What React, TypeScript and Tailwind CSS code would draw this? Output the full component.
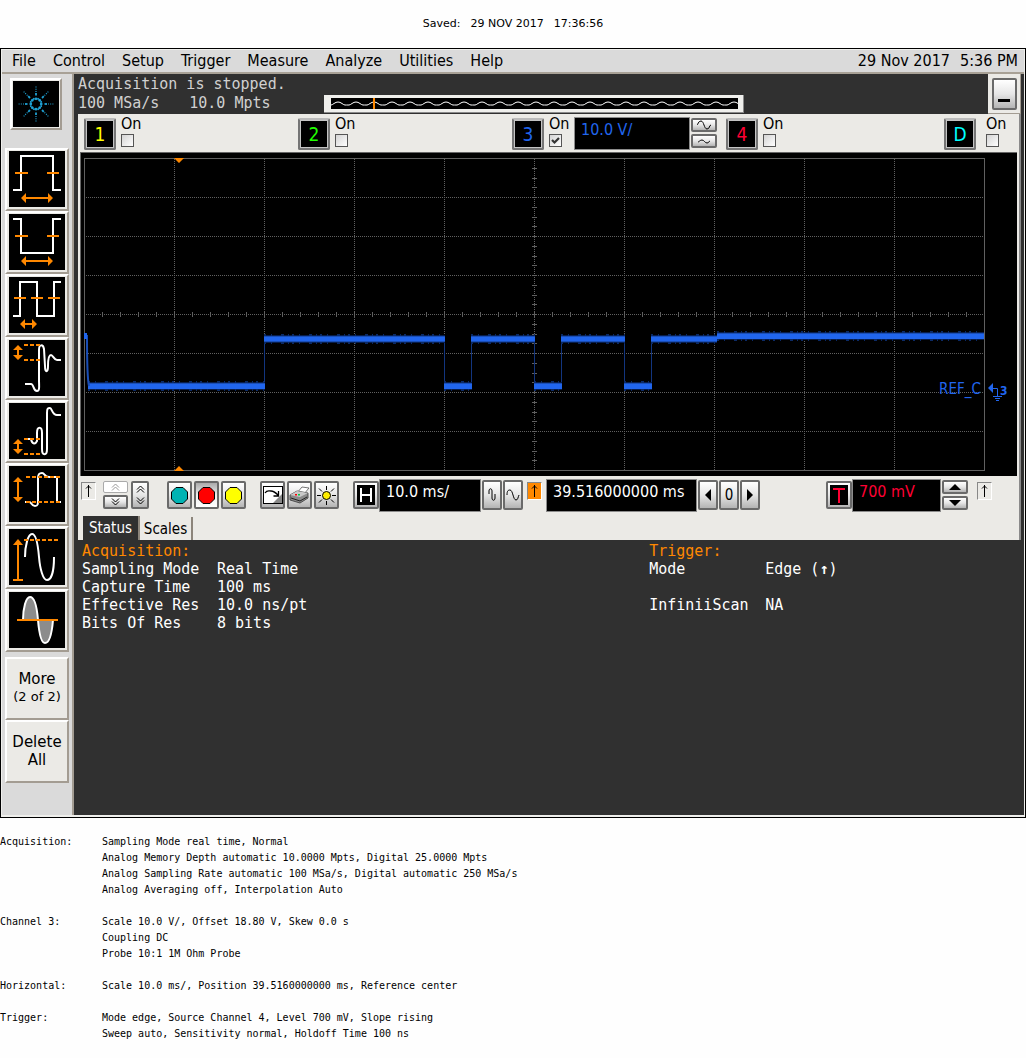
import { useState } from 'react';
import type { ReactNode } from 'react';

const ORANGE = '#ff8800';
const BLUE = '#2166ee';

const keyClass =
  'flex shrink-0 items-center justify-center rounded-xs border-2 border-[#6a6a6a] bg-linear-to-b from-white via-[#e6e6e6] to-[#b4b4b4] text-black';
const fieldClass =
  'min-w-0 shrink-0 border border-[#8c8c8c] bg-black pb-2 pl-1.5 text-[16px] outline-none';

/* ---------- menu ---------- */

const menus = ['File', 'Control', 'Setup', 'Trigger', 'Measure', 'Analyze', 'Utilities', 'Help'];

function MenuBar() {
  return (
    <header className="flex h-6 items-center justify-between border-b-2 border-[#a8a196] pr-1.5 pl-2.5 text-[16px]">
      <nav className="flex gap-[17px]">
        {menus.map((m) => (
          <button key={m} type="button" className="leading-5">
            {m}
          </button>
        ))}
      </nav>
      <div className="flex gap-2.5 leading-5">
        <span>29 Nov 2017</span>
        <span>5:36 PM</span>
      </div>
    </header>
  );
}

/* ---------- measurement sidebar ---------- */

function HArrow({ x1, x2, y }: { x1: number; x2: number; y: number }) {
  return (
    <g fill={ORANGE}>
      <rect x={x1 + 4} y={y - 1} width={x2 - x1 - 8} height={2} />
      <path d={`M${x1} ${y}l5-5v10zM${x2} ${y}l-5-5v10z`} />
    </g>
  );
}

function VArrow({ y1, y2 }: { y1: number; y2: number }) {
  return (
    <g fill={ORANGE}>
      <rect x={8} y={y1 + 4} width={2} height={y2 - y1 - 8} />
      <path d={`M9 ${y1}l5 5h-10zM9 ${y2}l5-5h-10z`} />
    </g>
  );
}

function Trace({ d }: { d: string }) {
  return <path d={d} fill="none" stroke="white" strokeWidth={2} />;
}

function Dash({ d }: { d: string }) {
  return <path d={d} fill="none" stroke={ORANGE} strokeWidth={2} strokeDasharray="4 2" />;
}

function Level({ d }: { d: string }) {
  return <path d={d} fill="none" stroke={ORANGE} strokeWidth={2} />;
}

const measurements: { name: string; icon: ReactNode }[] = [
  {
    name: 'Positive width',
    icon: (
      <>
        <Trace d="M4 39H12V5H44V39H52" />
        <Level d="M6 22H19M38 22H50" />
        <HArrow x1={12} x2={44} y={47} />
      </>
    ),
  },
  {
    name: 'Negative width',
    icon: (
      <>
        <Trace d="M4 5H12V39H44V5H52" />
        <Level d="M6 22H19M38 22H50" />
        <HArrow x1={12} x2={44} y={47} />
      </>
    ),
  },
  {
    name: 'Period',
    icon: (
      <>
        <Trace d="M4 39H11V5H28V39H45V5H52" />
        <Level d="M5 21H17M22 21H34M39 21H51" />
        <HArrow x1={11} x2={28} y={47} />
      </>
    ),
  },
  {
    name: 'Overshoot',
    icon: (
      <>
        <Trace d="M16 44H22C25 44 24 51 28 51C31 51 30 46 30 40V10C30 4 34 4 35 9L36 26C36 33 39 33 39 26C39 18 40 15 42 15S45 20 48 20H52" />
        <Dash d="M15 5H31M15 20H31" />
        <VArrow y1={5} y2={20} />
      </>
    ),
  },
  {
    name: 'Preshoot',
    icon: (
      <>
        <Trace d="M19 36H22C23 41 26 42 28 38L28 30C28 23 33 23 33 30V46C33 53 38 53 38 46V10C38 5 39 5 41 5C43 5 43 12 48 12H52" />
        <Dash d="M15 36H31M15 51H31" />
        <VArrow y1={36} y2={51} />
      </>
    ),
  },
  {
    name: 'Amplitude',
    icon: (
      <>
        <Trace d="M16 36H20C23 36 22 40 26 40C29 40 29 38 29 34V12C29 8 30 7 33 7C36 7 35 11 40 11H48V36H52" />
        <Dash d="M17 11H51M17 36H51" />
        <VArrow y1={11} y2={36} />
      </>
    ),
  },
  {
    name: 'Maximum',
    icon: (
      <>
        <Trace d="M16 28C16 17 19 5 23 5C27 5 29 16 30 28C31 40 34 51 38 51C43 51 45 40 45 28" />
        <Dash d="M15 11H49" />
        <Level d="M4 51H14M9 51V14" />
        <path d="M9 10l5 6h-10z" fill={ORANGE} />
      </>
    ),
  },
  {
    name: 'Area',
    icon: (
      <>
        <path
          d="M14 28C14 16 17 5 21 5C26 5 28 16 29 28C30 40 32 51 36 51C41 51 43 40 44 28"
          fill="#8c8c8c"
          stroke="white"
          strokeWidth={2}
        />
        <Level d="M8 28H49" />
      </>
    ),
  },
];

const spokes = [0, 45, 90, 135, 180, 225, 270, 315];

function SparkLogo() {
  return (
    <svg viewBox="0 0 46 46" className="size-full" fill="#1ea0d2" stroke="#1ea0d2">
      {spokes.map((a) => (
        <g key={a} transform={`rotate(${a} 23 23)`}>
          <circle cx={28.2} cy={23} r={1.4} stroke="none" />
          <path d="M31.500 23H34" strokeWidth={1.8} />
          <path d="M35 23H40.500" strokeWidth={1.2} strokeDasharray="1 1.200" />
        </g>
      ))}
      {spokes.map((a) => (
        <circle key={a} cx={28.6} cy={23} r={1} stroke="none" transform={`rotate(${a + 22} 23 23)`} />
      ))}
    </svg>
  );
}

const bevel = 'border-2 border-t-white border-l-white border-r-[#a39c92] border-b-[#a39c92] bg-[#ebeae6]';

function Sidebar() {
  return (
    <aside className="flex w-[72px] shrink-0 flex-col border-r-2 border-[#a39c92] bg-[#dadada] pl-[3px]">
      <button type="button" aria-label="About" className={`${bevel} mt-1 ml-[5px] size-[52px] p-px`}>
        <span className="block size-full bg-black">
          <SparkLogo />
        </span>
      </button>
      <div className="mt-[18px] flex flex-col">
        {measurements.map((m) => (
          <button key={m.name} type="button" aria-label={m.name} className={`${bevel} flex h-[63px] w-16 p-0.5 pt-px`}>
            <svg viewBox="0 0 56 56" className="size-14 bg-black">
              {m.icon}
            </svg>
          </button>
        ))}
      </div>
      <div className="mt-[5px] flex flex-col [font-family:'DejaVu_Sans',sans-serif] text-[15px] leading-[18px]">
        <button type="button" className={`${bevel} h-[63px] w-16 pb-0.5`}>
          More
          <span className="block text-[13px]">(2 of 2)</span>
        </button>
        <button type="button" className={`${bevel} h-[63px] w-16 pb-0.5`}>
          Delete All
        </button>
      </div>
    </aside>
  );
}

/* ---------- acquisition banner ---------- */

const memoryWave =
  'M0 5' + Array.from({ length: 23 }, () => 'q1 0 3-1.5t4-1.5t4 1.5t3 1.5t4 0').join('');

function AcquisitionBar() {
  return (
    <div className="flex h-10 justify-between">
      <div className="flex">
        <div className="w-[246px] pt-px [font-family:'DejaVu_Sans_Mono',monospace] text-[15px] leading-[19px] text-[#d0d0d0]">
          <p>Acquisition is stopped.</p>
          <div className="flex gap-[30px]">
            <span>100 MSa/s</span>
            <span>10.0 Mpts</span>
          </div>
        </div>
        <div className="mb-px self-end border-r border-b border-[#8a8a8a] bg-[#efefec] py-[3px] pr-[5px] pl-[7px]">
          <svg viewBox="0 0 407 11" className="h-[11px] w-[407px] bg-black">
            <path d={memoryWave} fill="none" stroke="white" strokeWidth={1} transform="translate(0 2)" />
            <rect x={42} y={0} width={2} height={11} fill={ORANGE} />
          </svg>
        </div>
      </div>
      <div className="flex w-[33px] items-center justify-center border-r border-b border-[#a39c92] bg-[#ebeae6]">
        <button type="button" aria-label="Minimize" className={`${keyClass} h-8 w-[25px] items-end pb-1.5`}>
          <span className="h-[3px] w-3 bg-black" />
        </button>
      </div>
    </div>
  );
}

/* ---------- channels ---------- */

function Channel({
  id,
  color,
  on = false,
  wide = false,
  children,
}: {
  id: string;
  color: string;
  on?: boolean;
  wide?: boolean;
  children?: ReactNode;
}) {
  const [checked, setChecked] = useState(on);
  return (
    <div className={`flex items-start pt-1 ${wide ? 'gap-2.5' : 'gap-[5px]'}`}>
      <button
        type="button"
        className={`size-8 shrink-0 rounded-xs border-2 border-[#757575] border-t-[#bbb] bg-black text-center text-[19px] leading-7 outline-1 -outline-offset-3 outline-[#c4c4c4] ${color}`}
      >
        {id}
      </button>
      <div className="flex items-start">
        <label className="relative -mt-1 flex w-[25px] shrink-0 flex-col text-[16px] leading-5">
          On
          <input
            type="checkbox"
            checked={checked}
            onChange={() => setChecked(!checked)}
            className="size-[13px] appearance-none border border-[#555] bg-linear-to-br from-[#d4d4d4] to-white"
          />
          {checked && (
            <svg viewBox="0 0 13 13" className="pointer-events-none absolute top-5 left-0 size-[13px]">
              <path d="M3 6L5.5 8.500L10 4" fill="none" stroke="#333" strokeWidth={2.2} />
            </svg>
          )}
        </label>
        {children}
      </div>
    </div>
  );
}

function ChannelRow() {
  return (
    <div className="grid h-[38px] grid-cols-[214fr_214fr_214fr_218fr_75fr] pl-1.5">
      <Channel id="1" color="text-[#ffff00]" />
      <Channel id="2" color="text-[#22ff00]" />
      <Channel id="3" color="text-[#2166ee]" on>
        <input aria-label="Channel 3 scale" defaultValue="10.0 V/" className={`${fieldClass} -mt-px h-[33px] w-[116px] text-[#2166ee]`} />
        <span className="ml-px flex flex-col gap-0.5">
          <button type="button" aria-label="Larger scale" className={`${keyClass} h-[14px] w-[26px]`}>
            <svg viewBox="0 0 16 10" className="h-2.5 w-4" fill="none" stroke="black">
              <path d="M1 5C2 5 2 1 5 1S8 9 11 9S13 5 15 5" />
            </svg>
          </button>
          <button type="button" aria-label="Smaller scale" className={`${keyClass} h-[14px] w-[26px]`}>
            <svg viewBox="0 0 16 10" className="h-2.5 w-4" fill="none" stroke="black">
              <path d="M2 6C3 6 4 4 6 4S9 7 11 7S13 5 14 5" />
            </svg>
          </button>
        </span>
      </Channel>
      <Channel id="4" color="text-[#ff0033]" />
      <Channel id="D" color="text-[#00ffff]" wide />
    </div>
  );
}

/* ---------- graticule ---------- */

const columns = [174, 264, 354, 444, 624, 714, 804, 894];
const rows = [197, 236, 275, 353, 392, 431];
const highs = [
  { x: 264, w: 181, y: 339, h: 4 },
  { x: 471, w: 64, y: 339, h: 4 },
  { x: 561, w: 64, y: 339, h: 4 },
  { x: 651, w: 66, y: 339, h: 4 },
  { x: 717, w: 267, y: 336, h: 5 },
];
const lows = [
  { x: 88, w: 177, y: 386, h: 5 },
  { x: 444, w: 28, y: 386, h: 5 },
  { x: 534, w: 28, y: 386, h: 5 },
  { x: 624, w: 28, y: 386, h: 5 },
];
const edges = [264, 444, 471, 534, 561, 624, 651];

function Graticule() {
  const ticksX = Array.from({ length: 49 }, (_, i) => 102 + i * 18);
  const ticksY = Array.from({ length: 31 }, (_, i) => Math.round(158 + (i + 1) * 9.75));
  return (
    <svg viewBox="81 153 936 323" className="block w-full bg-black" role="img" aria-label="Waveform">
      <g stroke="#606060" fill="none" shapeRendering="crispEdges">
        <rect x={84.5} y={158.5} width={900} height={312} />
        <g strokeDasharray="1 1">
          {columns.map((x) => (
            <path key={x} d={`M${x + 0.5} 159V470`} />
          ))}
          {rows.map((y) => (
            <path key={y} d={`M86 ${y + 0.5}H984`} />
          ))}
          <path d="M86 314.500H984M534.500 159V470" />
        </g>
        {ticksX.map((x) => (
          <path key={x} d={`M${x + 0.5} 312V317`} />
        ))}
        {ticksY.map((y) => (
          <path key={y} d={`M532 ${y + 0.5}H537`} />
        ))}
      </g>
      <g shapeRendering="crispEdges">
        {edges.map((x) => (
          <rect key={x} x={x} y={340} width={1} height={46} fill="#12357f" />
        ))}
        {[...highs, ...lows].map((s) => (
          <g key={`${s.x}-${s.y}`}>
            <path d={`M${s.x} ${s.y}h${s.w}`} stroke="#071d4c" strokeWidth={8} />
            <path d={`M${s.x} ${s.y}h${s.w}`} stroke="#0b2a66" strokeWidth={10} strokeDasharray="2 5 1 9 3 4 1 3" />
            <path d={`M${s.x} ${s.y}h${s.w}`} stroke="#1a4fb8" strokeWidth={6} />
            <rect x={s.x} y={s.y - 2} width={s.w} height={s.h} fill={BLUE} />
          </g>
        ))}
      </g>
      <path d="M84 336H87C87 350 87 378 89 386" fill="none" stroke="#1a4fb8" strokeWidth={2} />
      <rect x={84} y={333} width={3} height={6} fill={BLUE} />
      <path d="M174 158h10l-5 5zM174 471h10l-5-5z" fill={ORANGE} />
      <text x={939} y={394} fontSize={15} fill={BLUE}>
        REF_C
      </text>
      <path d="M988 388l5-5v10z" fill={BLUE} />
      <path d="M992 388.500H997.500V396M993 396.500H1002M995 398.500H1000M996 400.500H999" stroke={BLUE} fill="none" />
      <text x={1000} y={395} fontSize={12} fontWeight={700} fill={BLUE}>
        3
      </text>
    </svg>
  );
}

/* ---------- toolbar ---------- */

function UpArrow({ label, orange = false }: { label: string; orange?: boolean }) {
  return (
    <button
      type="button"
      aria-label={label}
      className={`mt-0.5 flex h-[18px] w-[15px] shrink-0 items-center justify-center border border-t-[#888] border-l-[#888] border-r-white border-b-white ${orange ? 'bg-[#ff8800]' : 'bg-[#ebeae6]'}`}
    >
      <svg viewBox="0 0 7 12" className="h-3 w-[7px]" fill="none" stroke="black">
        <path d="M3.500 0V12M1 3.500L3.500 1L6 3.500" />
      </svg>
    </button>
  );
}

function Key({ label, className, children }: { label: string; className: string; children: ReactNode }) {
  return (
    <button type="button" aria-label={label} className={`${keyClass} ${className}`}>
      {children}
    </button>
  );
}

function Chevron({ up = false }: { up?: boolean }) {
  return (
    <svg viewBox="0 0 9 8" className={`h-2 w-[9px] ${up ? '' : 'rotate-180'}`} fill="none" stroke="currentColor">
      <path d="M1 4.500L4.500 1L8 4.500M1 7.500L4.500 4L8 7.500" />
    </svg>
  );
}

function Octagon({ fill }: { fill: string }) {
  return (
    <svg viewBox="0 0 17 17" className="size-[17px] shrink-0">
      <path d="M5 .5h7l4.500 4.500v7L12 16.500H5L.5 12V5z" fill={fill} stroke="black" />
    </svg>
  );
}

function Toolbar() {
  return (
    <div className="flex h-[37px] items-start pt-1 pl-[3px]">
      <div className="flex items-start">
        <UpArrow label="Marker up" />
        <div className="ml-[7px] flex flex-col gap-0.5 pt-px">
          <button type="button" aria-label="Expand" className="flex h-3 w-[25px] items-center justify-center rounded-xs border border-[#aaa] bg-white text-[#999]">
            <Chevron up />
          </button>
          <Key label="Collapse" className="h-3.5 w-[25px]">
            <Chevron />
          </Key>
        </div>
        <Key label="Resize" className="mt-px ml-[3px] h-7 w-[18px] flex-col gap-1">
          <Chevron up />
          <Chevron />
        </Key>
      </div>

      <div className="mt-px ml-[18px] flex gap-0.5">
        <Key label="Run" className="h-7 w-[25px]">
          <Octagon fill="#00b3b3" />
        </Key>
        <button type="button" aria-label="Stop" className="flex h-7 w-[25px] items-center justify-center rounded-xs border-2 border-[#6a6a6a] bg-linear-to-b from-[#aaa] via-[#eee] to-white">
          <Octagon fill="#ff0000" />
        </button>
        <Key label="Single" className="h-7 w-[25px]">
          <Octagon fill="#ffff00" />
        </Key>
      </div>

      <div className="mt-px ml-3.5 flex gap-0.5">
        <Key label="Clear display" className="h-7 w-[25px]">
          <svg viewBox="0 0 20 18" className="h-[18px] w-5 shrink-0">
            <rect x={0.5} y={0.5} width={19} height={17} fill="white" stroke="black" />
            <path d="M19 8V17H10z" fill="#888" />
            <path d="M2 7C4 4 5 5 8 5C11 5 13 7 15 9M15.500 5V10H10.500" fill="none" stroke="black" strokeWidth={1.3} />
          </svg>
        </Key>
        <Key label="Print" className="h-7 w-[25px]">
          <svg viewBox="0 0 21 20" className="h-5 w-[21px] shrink-0">
            <path d="M8 8L13 2L20 3L15 9z" fill="white" stroke="#555" strokeWidth={0.8} />
            <path d="M1 10L8 6L19 8V13L11 18L1 15z" fill="#8b8b8b" stroke="#333" strokeWidth={0.8} />
            <path d="M1 10L8 6L19 8L11 12z" fill="#c8c8c8" />
            <path d="M2 13L11 16L18 12" stroke="#222" fill="none" />
            <rect x={6} y={9} width={2} height={1.5} fill="#ff0000" />
            <rect x={9} y={9} width={2} height={1.5} fill="#00cc44" />
          </svg>
        </Key>
        <Key label="Intensity" className="h-7 w-[25px]">
          <svg viewBox="0 0 19 19" className="size-[19px] shrink-0">
            <path d="M9.500 0V4M9.500 15V19M0 9.500H4M15 9.500H19M2 2.500L5 5.500M17 2.500L14 5.500M2 16.500L5 13.500M17 16.500L14 13.500" stroke="black" />
            <circle cx={9.5} cy={9.5} r={4} fill="#ffee00" stroke="black" />
          </svg>
        </Key>
      </div>

      <div className="ml-3.5 flex items-start">
        <button type="button" aria-label="Horizontal" className={`${keyClass} mt-px h-7 w-[26px]`}>
          <svg viewBox="0 0 18 20" className="h-5 w-[18px] shrink-0 bg-black">
            <path d="M4 3V17M14 3V17M4 10H14" stroke="white" strokeWidth={2} />
          </svg>
        </button>
        <input aria-label="Time scale" defaultValue="10.0 ms/" className={`${fieldClass} -mt-px h-[33px] w-[102px] text-white`} />
        <Key label="Shorter time" className="ml-px h-[30px] w-5">
          <svg viewBox="0 0 8 14" className="h-3.5 w-2 shrink-0" fill="none" stroke="black">
            <path d="M1 6V3C1 0 4 0 4 3V10C4 13 7 13 7 10V6" />
          </svg>
        </Key>
        <Key label="Longer time" className="ml-px h-[30px] w-5">
          <svg viewBox="0 0 14 14" className="size-3.5 shrink-0" fill="none" stroke="black">
            <path d="M1 7C1 3 2 2 4 2C7 2 7 12 10 12C12 12 12 9 13 7" />
          </svg>
        </Key>
      </div>

      <div className="ml-1 flex items-start">
        <UpArrow label="Time reference" orange />
        <input aria-label="Horizontal position" defaultValue="39.516000000 ms" className={`${fieldClass} -mt-px ml-1 h-[33px] w-[151px] text-white`} />
        <Key label="Earlier" className="ml-px h-[30px] w-5">
          <svg viewBox="0 0 6 12" className="h-3 w-1.5">
            <path d="M6 0V12L0 6z" />
          </svg>
        </Key>
        <Key label="Zero" className="ml-px h-[30px] w-5">
          <span className="text-[15px]">0</span>
        </Key>
        <Key label="Later" className="ml-px h-[30px] w-5">
          <svg viewBox="0 0 6 12" className="h-3 w-1.5">
            <path d="M0 0V12L6 6z" />
          </svg>
        </Key>
      </div>

      <div className="mr-[27px] ml-auto flex items-start">
        <Key label="Trigger" className="mt-px h-7 w-[26px]">
          <svg viewBox="0 0 18 20" className="h-5 w-[18px] shrink-0 bg-black">
            <path d="M3 4H15M9 4V18" stroke="#ff0033" strokeWidth={2} />
          </svg>
        </Key>
        <input aria-label="Trigger level" defaultValue="700 mV" className={`${fieldClass} -mt-px h-[33px] w-[89px] text-[#ff0033]`} />
        <div className="ml-px flex flex-col gap-0.5">
          <Key label="Raise level" className="h-3.5 w-[26px]">
            <svg viewBox="0 0 12 6" className="h-1.5 w-3">
              <path d="M0 6H12L6 0z" />
            </svg>
          </Key>
          <Key label="Lower level" className="h-3.5 w-[26px]">
            <svg viewBox="0 0 12 6" className="h-1.5 w-3">
              <path d="M0 0H12L6 6z" />
            </svg>
          </Key>
        </div>
        <div className="ml-[9px]">
          <UpArrow label="Rising slope" />
        </div>
      </div>
    </div>
  );
}

function Tabs() {
  return (
    <div role="tablist" className="mt-[3px] flex h-6 items-end pl-[5px] text-[15px] leading-6">
      <button type="button" role="tab" aria-selected="true" className="h-6 w-[57px] border-r-2 border-[#8c857b] bg-[#303030] text-white">
        Status
      </button>
      <button type="button" role="tab" aria-selected="false" className="h-[23px] w-[53px] border-r-2 border-[#8c857b] leading-[22px]">
        Scales
      </button>
    </div>
  );
}

/* ---------- status ---------- */

const acquisition = [
  ['Sampling Mode', 'Real Time'],
  ['Capture Time', '100 ms'],
  ['Effective Res', '10.0 ns/pt'],
  ['Bits Of Res', '8 bits'],
];

function StatusPanel() {
  return (
    <div className="grid grid-cols-[569fr_373fr] pt-0.5 pl-1 [font-family:'DejaVu_Sans_Mono',monospace] text-[15px] leading-[18px] text-white">
      <section>
        <h2 className="text-[#ff8800]">Acquisition:</h2>
        <dl>
          {acquisition.map(([k, v]) => (
            <div key={k} className="flex">
              <dt className="w-[135px]">{k}</dt>
              <dd>{v}</dd>
            </div>
          ))}
        </dl>
      </section>
      <section>
        <h2 className="text-[#ff8800]">Trigger:</h2>
        <dl className="flex flex-col gap-[18px]">
          <div className="flex">
            <dt className="w-[116px]">Mode</dt>
            <dd>
              Edge (<b>↑</b>)
            </dd>
          </div>
          <div className="flex">
            <dt className="w-[116px]">InfiniiScan</dt>
            <dd>NA</dd>
          </div>
        </dl>
      </section>
    </div>
  );
}

/* ---------- saved setup listing ---------- */

const setup = [
  {
    title: 'Acquisition:',
    lines: [
      'Sampling Mode real time, Normal',
      'Analog Memory Depth automatic 10.0000 Mpts, Digital 25.0000 Mpts',
      'Analog Sampling Rate automatic 100 MSa/s, Digital automatic 250 MSa/s',
      'Analog Averaging off, Interpolation Auto',
    ],
  },
  { title: 'Channel 3:', lines: ['Scale 10.0 V/, Offset 18.80 V, Skew 0.0 s', 'Coupling DC', 'Probe 10:1 1M Ohm Probe'] },
  { title: 'Horizontal:', lines: ['Scale 10.0 ms/, Position 39.5160000000 ms, Reference center'] },
  {
    title: 'Trigger:',
    lines: ['Mode edge, Source Channel 4, Level 700 mV, Slope rising', 'Sweep auto, Sensitivity normal, Holdoff Time 100 ns'],
  },
];

function SetupListing() {
  return (
    <dl className="mt-4 flex flex-col gap-4 [font-family:'DejaVu_Sans_Mono',monospace] text-[10px] leading-4">
      {setup.map((s) => (
        <div key={s.title} className="flex">
          <dt className="w-[102px] shrink-0">{s.title}</dt>
          <dd>
            {s.lines.map((l) => (
              <p key={l}>{l}</p>
            ))}
          </dd>
        </div>
      ))}
    </dl>
  );
}

export default function App() {
  return (
    <div className="min-h-screen bg-[#fefefe] [font-family:'DejaVu_Sans_Condensed','Noto_Sans',sans-serif] text-black">
      <p className="flex h-12 items-center justify-center gap-2.5 [font-family:'DejaVu_Sans',sans-serif] text-[11px]">
        <span>Saved:</span>
        <span>29 NOV 2017</span>
        <span>17:36:56</span>
      </p>
      <main className="border border-black">
        <div className="border border-b-2 border-[#efefec] bg-[#dadada]">
          <MenuBar />
          <div className="flex min-h-[741px]">
            <Sidebar />
            <div className="flex min-w-0 flex-1 flex-col bg-[#303030] pr-[3px] pl-1">
              <AcquisitionBar />
              <div className="border-r-2 border-[#8a8a8a] bg-[#ebeae6]">
                <ChannelRow />
                <div className="mr-0.5 ml-0.5 border-t border-l border-[#666]">
                  <Graticule />
                </div>
                <Toolbar />
                <Tabs />
              </div>
              <StatusPanel />
            </div>
          </div>
        </div>
      </main>
      <SetupListing />
    </div>
  );
}
